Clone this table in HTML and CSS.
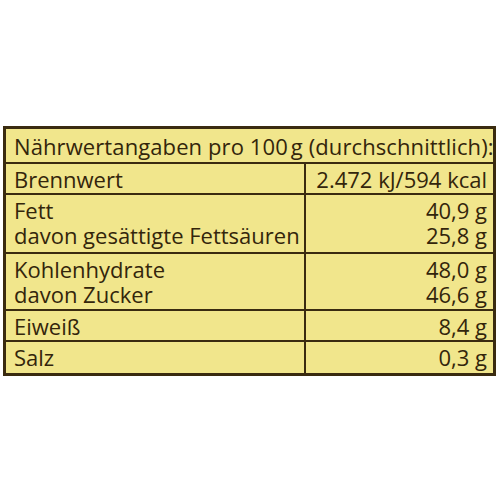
FILE: index.html
```html
<!DOCTYPE html>
<html lang="de">
<head>
<meta charset="utf-8">
<link rel="stylesheet" href="styles.css">
</head>
<body>
<div class="page">
  <div class="table">
    <div class="cell head"><span class="line">Nährwertangaben pro 100&#8239;g (durchschnittlich):</span></div>
    <div class="cell label"><span class="line">Brennwert</span></div>
    <div class="cell value"><span class="line">2.472 kJ/594 kcal</span></div>
    <div class="cell label"><span class="line">Fett</span><span class="line">davon gesättigte Fettsäuren</span></div>
    <div class="cell value"><span class="line">40,9 g</span><span class="line">25,8 g</span></div>
    <div class="cell label"><span class="line">Kohlenhydrate</span><span class="line">davon Zucker</span></div>
    <div class="cell value"><span class="line">48,0 g</span><span class="line">46,6 g</span></div>
    <div class="cell label"><span class="line">Eiweiß</span></div>
    <div class="cell value"><span class="line">8,4 g</span></div>
    <div class="cell label last"><span class="line">Salz</span></div>
    <div class="cell value last"><span class="line">0,3 g</span></div>
  </div>
</div>
</body>
</html>
```
FILE: styles.css
```css
html, body {
  margin: 0;
  padding: 0;
  background: #ffffff;
}
.page {
  width: 500px;
  height: 500px;
  padding: 126px 0 0 3px;
  box-sizing: border-box;
}
.table {
  width: 493px;
  box-sizing: border-box;
  border: 3px solid #3a2b10;
  background: #f1e68c;
  display: grid;
  grid-template-columns: 300px 1fr;
  grid-template-rows: 35px 31px 59px 57px 31px 31px;
  font-family: "Open Sans", "DejaVu Sans", sans-serif;
  font-size: 22px;
  font-weight: 500;
  color: #33250b;
}
.line {
  display: block;
  height: 25px;
  line-height: 25px;
  white-space: nowrap;
}
.cell {
  border-bottom: 2px solid #3a2b10;
  box-sizing: border-box;
  padding: 2px 8px 0 8px;
}
.cell.last {
  border-bottom: none;
}
.head {
  grid-column: 1 / -1;
  padding-top: 5px;
  letter-spacing: 0.1px;
}
.label {
  border-right: 2px solid #3a2b10;
  padding-top: 3px;
}
.value {
  text-align: right;
  padding-right: 6px;
  padding-top: 3px;
}
```
